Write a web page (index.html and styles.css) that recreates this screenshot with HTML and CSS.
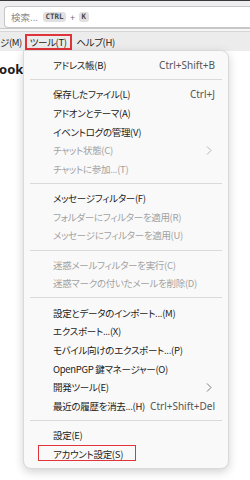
FILE: index.html
```html
<!DOCTYPE html>
<html lang="ja">
<head>
<meta charset="utf-8">
<link rel="stylesheet" href="styles.css">
</head>
<body>
<div class="topline"></div>
<div class="toolbar">
  <div class="search">
    <span class="ph">検索...</span>
    <span class="kbd">CTRL</span>
    <span class="plus">+</span>
    <span class="kbd">K</span>
  </div>
</div>
<div class="strip"></div>
<div class="menubar">
  <span class="mb-item first">ジ(M)</span>
  <span class="mb-item active">ツール(T)</span>
  <span class="mb-item">ヘルプ(H)</span>
</div>
<div class="content">
  <div class="title">ook</div>
</div>

<div class="popup">
  <div class="item"><span>アドレス帳(B)</span><span class="sc">Ctrl+Shift+B</span></div>
  <div class="sep"></div>
  <div class="item"><span>保存したファイル(L)</span><span class="sc">Ctrl+J</span></div>
  <div class="item"><span>アドオンとテーマ(A)</span></div>
  <div class="item"><span>イベントログの管理(V)</span></div>
  <div class="item dis"><span>チャット状態(C)</span><svg class="chev" width="6" height="9" viewBox="0 0 6 9"><polyline points="1,0.5 5,4.5 1,8.5" fill="none" stroke="currentColor" stroke-width="1"/></svg></div>
  <div class="item dis"><span>チャットに参加...(T)</span></div>
  <div class="sep"></div>
  <div class="item"><span>メッセージフィルター(F)</span></div>
  <div class="item dis"><span>フォルダーにフィルターを適用(R)</span></div>
  <div class="item dis"><span>メッセージにフィルターを適用(U)</span></div>
  <div class="sep"></div>
  <div class="item dis"><span>迷惑メールフィルターを実行(C)</span></div>
  <div class="item dis"><span>迷惑マークの付いたメールを削除(D)</span></div>
  <div class="sep"></div>
  <div class="item"><span>設定とデータのインポート...(M)</span></div>
  <div class="item"><span>エクスポート...(X)</span></div>
  <div class="item"><span>モバイル向けのエクスポート...(P)</span></div>
  <div class="item"><span>OpenPGP 鍵マネージャー(O)</span></div>
  <div class="item"><span>開発ツール(E)</span><svg class="chev dark" width="6" height="9" viewBox="0 0 6 9"><polyline points="1,0.5 5,4.5 1,8.5" fill="none" stroke="currentColor" stroke-width="1"/></svg></div>
  <div class="item"><span>最近の履歴を消去...(H)</span><span class="sc">Ctrl+Shift+Del</span></div>
  <div class="sep"></div>
  <div class="item"><span>設定(E)</span></div>
  <div class="item marked"><span>アカウント設定(S)</span><span class="mark"></span></div>
</div>
</body>
</html>
```

FILE: styles.css
```css
html, body {
  margin: 0;
  padding: 0;
}
body {
  width: 250px;
  height: 480px;
  overflow: hidden;
  position: relative;
  background: #ffffff;
  font-family: "Noto Sans CJK JP", "Noto Sans", sans-serif;
  font-feature-settings: "palt";
  color: #1b1b1b;
}
.topline {
  height: 1px;
  background: #3a3a3a;
}
.toolbar {
  background: #eeeef0;
  padding: 5px 0 0 4px;
  height: 22px;
  border-bottom: 1px solid #c9c9c9;
}
.search {
  box-sizing: border-box;
  height: 22px;
  background: #ffffff;
  border: 1px solid #c6c6c6;
  border-right: 0;
  border-radius: 4px 0 0 4px;
  display: flex;
  align-items: center;
  padding-left: 6px;
  font-size: 9.5px;
}
.ph {
  color: #8a8a8a;
  margin-right: 5px;
}
.kbd {
  background: #e0e0e2;
  border-radius: 3px;
  font-family: "DejaVu Sans Mono", monospace;
  font-weight: bold;
  font-size: 7.5px;
  color: #4a4a4a;
  padding: 0 2.5px;
  height: 10px;
  line-height: 10px;
}
.plus {
  color: #707070;
  margin: 0 4px;
  font-size: 9px;
}
.strip {
  height: 2px;
  background: #f6f6f6;
  border-bottom: 1px solid #d6d6d6;
}
.menubar {
  height: 19px;
  background: #ececec;
  display: flex;
  align-items: center;
  font-size: 9.5px;
  letter-spacing: -0.4px;
}
.mb-item {
  display: inline-block;
  padding: 0 3px;
  line-height: 12px;
  height: 12px;
  border: 2px solid transparent;
}
.mb-item.first {
  padding: 0 1px 0 0;
  border-left: 0;
}
.mb-item.active {
  border-color: #e0343a;
}
.content {
  padding: 10px 0 0 0;
}
.title {
  font-family: "Noto Sans", sans-serif;
  font-weight: bold;
  font-size: 13px;
  line-height: 16px;
  margin-left: -1px;
}
.popup {
  position: absolute;
  left: 23px;
  top: 50px;
  width: 206px;
  box-sizing: border-box;
  padding: 4.6px 0 4.7px 0;
  background: #f9f9f9;
  border: 1px solid #d9d9d9;
  border-radius: 0 8px 8px 8px;
  box-shadow: 0 3px 10px rgba(0,0,0,0.18);
  font-size: 9.5px;
  letter-spacing: -0.3px;
}
.item {
  position: relative;
  display: flex;
  align-items: center;
  justify-content: space-between;
  height: 18.7px;
  padding: 0 13px 0 29px;
  white-space: nowrap;
}
.item.dis {
  color: #a2a2a2;
}
.sc {
  font-family: "Noto Sans", sans-serif;
  font-size: 10px;
  letter-spacing: 0;
  color: #555555;
}
.chev {
  color: #b4b4b4;
  margin-right: 3px;
}
.chev.dark {
  color: #7a7a7a;
}
.sep {
  height: 1px;
  background: #d9d9d9;
  margin: 4.75px 6px;
}
.mark {
  position: absolute;
  left: 14px;
  top: 1px;
  width: 98px;
  height: 16px;
  box-sizing: border-box;
  border: 1.5px solid #e0343a;
}
```
